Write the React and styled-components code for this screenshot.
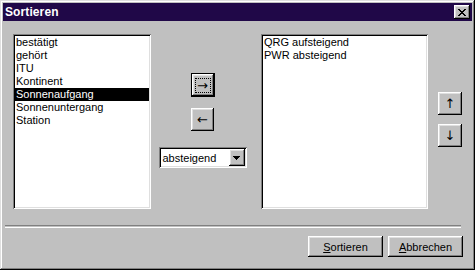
import React from 'react';
import styled, { createGlobalStyle } from 'styled-components';

const GlobalStyle = createGlobalStyle`
  html, body {
    margin: 0;
    padding: 0;
    background: #c0c0c0;
    overflow: hidden;
  }
  body {
    font-family: "Liberation Sans", Arial, sans-serif;
    font-size: 11px;
  }
`;

const raised = `
  background: #c0c0c0;
  box-shadow: inset -1px -1px #000, inset 1px 1px #fff,
    inset -2px -2px #808080, inset 2px 2px #dfdfdf;
`;

const sunken = `
  box-shadow: inset 1px 1px #808080, inset -1px -1px #fff,
    inset 2px 2px #000, inset -2px -2px #dfdfdf;
`;

const Window = styled.div`
  width: 475px;
  height: 270px;
  box-sizing: border-box;
  padding: 3px;
  display: flex;
  flex-direction: column;
  background: #c0c0c0;
  box-shadow: inset -1px -1px #000, inset 1px 1px #dfdfdf,
    inset -2px -2px #808080, inset 2px 2px #fff;
`;

const TitleBar = styled.div`
  height: 18px;
  background: #200848;
  display: flex;
  align-items: center;
  justify-content: space-between;
  padding: 0 2px 0 2px;
`;

const Title = styled.span`
  color: #fff;
  font-weight: bold;
  font-size: 12px;
  letter-spacing: 0.1px;
`;

const CloseButton = styled.div`
  ${raised}
  width: 16px;
  height: 14px;
  display: flex;
  align-items: center;
  justify-content: center;
`;

const Body = styled.div`
  flex: 1;
  display: flex;
  flex-direction: column;
`;

const MainRow = styled.div`
  display: flex;
  padding: 13px 0 0 10px;
  height: 175px;
`;

const ListBox = styled.div`
  ${sunken}
  background: #fff;
  width: ${p => p.$width}px;
  height: 175px;
  box-sizing: border-box;
  padding: 2px;
`;

const ListItem = styled.div`
  height: 13px;
  line-height: 13px;
  padding-left: 1px;
  white-space: nowrap;
  color: ${p => (p.$selected ? '#fff' : '#000')};
  background: ${p => (p.$selected ? '#000' : 'transparent')};
`;

const MiddleColumn = styled.div`
  width: 110px;
  display: flex;
  flex-direction: column;
  align-items: center;
  padding-top: 39px;
  padding-right: 7px;
  box-sizing: border-box;
`;

const ArrowButton = styled.div`
  ${raised}
  width: ${p => p.$w || 23}px;
  height: ${p => p.$h || 23}px;
  box-sizing: border-box;
  display: flex;
  align-items: center;
  justify-content: center;
  font-family: "DejaVu Sans", sans-serif;
  font-size: 13px;
  line-height: 1;
  margin-bottom: ${p => p.$mb || 0}px;
  ${p =>
    p.$default &&
    `
    border: 1px solid #000;
  `}
`;

const FocusRect = styled.div`
  width: 16px;
  height: 15px;
  box-sizing: border-box;
  border: 1px dotted #000;
  display: flex;
  align-items: center;
  justify-content: center;
`;

const Select = styled.div`
  ${sunken}
  background: #fff;
  width: 88px;
  height: 21px;
  box-sizing: border-box;
  padding: 2px;
  display: flex;
  align-items: center;
`;

const SelectText = styled.span`
  flex: 1;
  padding-left: 2px;
  font-size: 11px;
`;

const DropButton = styled.div`
  ${raised}
  width: 16px;
  height: 17px;
  display: flex;
  align-items: center;
  justify-content: center;
`;

const SideColumn = styled.div`
  display: flex;
  flex-direction: column;
  padding: 58px 0 0 10px;
`;

const Separator = styled.div`
  margin: 16px 0 0 2px;
  width: 456px;
  height: 1px;
  border-top: 1px solid #808080;
  border-bottom: 1px solid #fff;
`;

const Footer = styled.div`
  display: flex;
  justify-content: flex-end;
  gap: 5px;
  padding: 8px 9px 0 0;
`;

const PushButton = styled.div`
  ${raised}
  width: 75px;
  height: 21px;
  display: flex;
  align-items: center;
  justify-content: center;
  font-size: 11px;
`;

const Mnemonic = styled.span`
  text-decoration: underline;
`;

const leftItems = [
  'bestätigt',
  'gehört',
  'ITU',
  'Kontinent',
  'Sonnenaufgang',
  'Sonnenuntergang',
  'Station',
];

const rightItems = ['QRG aufsteigend', 'PWR absteigend'];

export default function App() {
  return (
    <>
      <GlobalStyle />
      <Window>
        <TitleBar>
          <Title>Sortieren</Title>
          <CloseButton>
            <svg width="8" height="7" viewBox="0 0 8 7" shapeRendering="crispEdges">
              <path
                d="M0 0h2v1h-2zM6 0h2v1h-2zM1 1h2v1h-2zM5 1h2v1h-2zM2 2h4v1h-4zM3 3h2v1h-2zM2 4h4v1h-4zM1 5h2v1h-2zM5 5h2v1h-2zM0 6h2v1h-2zM6 6h2v1h-2z"
                fill="#000"
              />
            </svg>
          </CloseButton>
        </TitleBar>
        <Body>
          <MainRow>
            <ListBox $width={138}>
              {leftItems.map(item => (
                <ListItem key={item} $selected={item === 'Sonnenaufgang'}>
                  {item}
                </ListItem>
              ))}
            </ListBox>
            <MiddleColumn>
              <ArrowButton $default $w={24} $h={24} $mb={11}>
                <FocusRect>→</FocusRect>
              </ArrowButton>
              <ArrowButton $mb={16}>←</ArrowButton>
              <Select>
                <SelectText>absteigend</SelectText>
                <DropButton>
                  <svg width="7" height="4" viewBox="0 0 7 4" shapeRendering="crispEdges">
                    <path d="M0 0h7v1h-7zM1 1h5v1h-5zM2 2h3v1h-3zM3 3h1v1h-1z" fill="#000" />
                  </svg>
                </DropButton>
              </Select>
            </MiddleColumn>
            <ListBox $width={167}>
              {rightItems.map(item => (
                <ListItem key={item}>{item}</ListItem>
              ))}
            </ListBox>
            <SideColumn>
              <ArrowButton $w={24} $h={23} $mb={9}>↑</ArrowButton>
              <ArrowButton $w={24} $h={23}>↓</ArrowButton>
            </SideColumn>
          </MainRow>
          <Separator />
          <Footer>
            <PushButton>
              <span>
                <Mnemonic>S</Mnemonic>ortieren
              </span>
            </PushButton>
            <PushButton>
              <span>
                <Mnemonic>A</Mnemonic>bbrechen
              </span>
            </PushButton>
          </Footer>
        </Body>
      </Window>
    </>
  );
}
